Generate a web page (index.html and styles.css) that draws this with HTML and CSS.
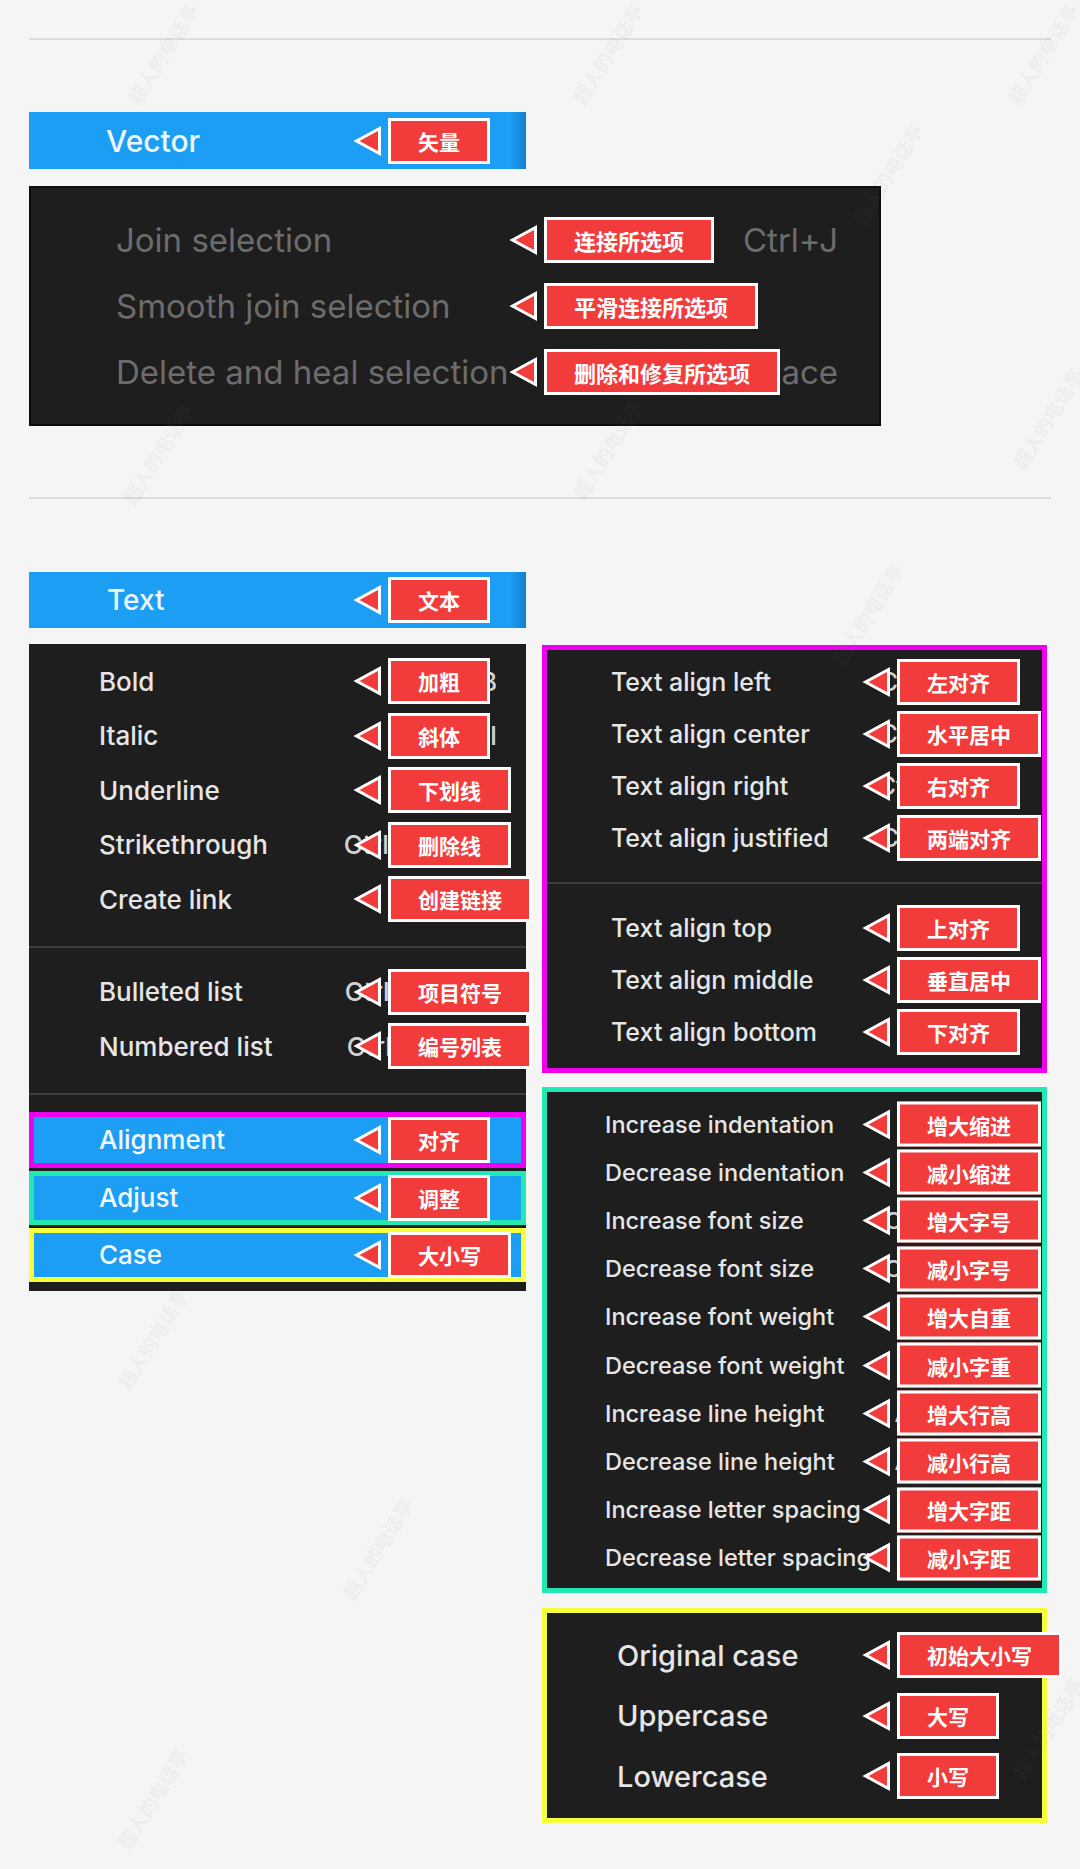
FILE: index.html
```html
<!DOCTYPE html>
<html lang="zh-CN">
<head>
<meta charset="utf-8">
<title>菜单注释 · Vector / Text</title>
<link rel="stylesheet" href="styles.css">
</head>
<body>
<main class="page">
  <hr class="rule">

  <section class="group group-vector">
    <div class="bar bar-vector">
      <span class="bar-label">Vector</span>
      <span class="note"><svg class="arrow" viewBox="0 0 28 30"><polygon points="2.5,15 25.5,2.5 25.5,27.5"/></svg><span class="tag">矢量</span></span>
    </div>
    <div class="panel panel-vector">
      <div class="item"><span class="label">Join selection</span><span class="key">Ctrl+J</span>
        <span class="note"><svg class="arrow" viewBox="0 0 28 30"><polygon points="2.5,15 25.5,2.5 25.5,27.5"/></svg><span class="tag">连接所选项</span></span></div>
      <div class="item"><span class="label">Smooth join selection</span>
        <span class="note"><svg class="arrow" viewBox="0 0 28 30"><polygon points="2.5,15 25.5,2.5 25.5,27.5"/></svg><span class="tag">平滑连接所选项</span></span></div>
      <div class="item"><span class="label">Delete and heal selection</span><span class="key">Backspace</span>
        <span class="note"><svg class="arrow" viewBox="0 0 28 30"><polygon points="2.5,15 25.5,2.5 25.5,27.5"/></svg><span class="tag">删除和修复所选项</span></span></div>
    </div>
  </section>

  <hr class="rule rule-mid">

  <section class="group group-text">
    <div class="bar bar-text">
      <span class="bar-label">Text</span>
      <span class="note"><svg class="arrow" viewBox="0 0 28 30"><polygon points="2.5,15 25.5,2.5 25.5,27.5"/></svg><span class="tag">文本</span></span>
    </div>

    <div class="columns">
      <div class="panel panel-text">
        <div class="item"><span class="label">Bold</span><span class="key">Ctrl+B</span>
          <span class="note"><svg class="arrow" viewBox="0 0 28 30"><polygon points="2.5,15 25.5,2.5 25.5,27.5"/></svg><span class="tag">加粗</span></span></div>
        <div class="item"><span class="label">Italic</span><span class="key">Ctrl+I</span>
          <span class="note"><svg class="arrow" viewBox="0 0 28 30"><polygon points="2.5,15 25.5,2.5 25.5,27.5"/></svg><span class="tag">斜体</span></span></div>
        <div class="item"><span class="label">Underline</span><span class="key">Ctrl+U</span>
          <span class="note"><svg class="arrow" viewBox="0 0 28 30"><polygon points="2.5,15 25.5,2.5 25.5,27.5"/></svg><span class="tag">下划线</span></span></div>
        <div class="item"><span class="label">Strikethrough</span><span class="key">Ctrl+Shift+X</span>
          <span class="note"><svg class="arrow" viewBox="0 0 28 30"><polygon points="2.5,15 25.5,2.5 25.5,27.5"/></svg><span class="tag">删除线</span></span></div>
        <div class="item"><span class="label">Create link</span><span class="key">Ctrl+K</span>
          <span class="note"><svg class="arrow" viewBox="0 0 28 30"><polygon points="2.5,15 25.5,2.5 25.5,27.5"/></svg><span class="tag">创建链接</span></span></div>
        <div class="sep"></div>
        <div class="item"><span class="label">Bulleted list</span><span class="key">Ctrl+Shift+8</span>
          <span class="note"><svg class="arrow" viewBox="0 0 28 30"><polygon points="2.5,15 25.5,2.5 25.5,27.5"/></svg><span class="tag">项目符号</span></span></div>
        <div class="item"><span class="label">Numbered list</span><span class="key">Ctrl+Shift+7</span>
          <span class="note"><svg class="arrow" viewBox="0 0 28 30"><polygon points="2.5,15 25.5,2.5 25.5,27.5"/></svg><span class="tag">编号列表</span></span></div>
        <div class="sep"></div>
        <div class="item item-sub hl-magenta"><span class="label">Alignment</span>
          <span class="note"><svg class="arrow" viewBox="0 0 28 30"><polygon points="2.5,15 25.5,2.5 25.5,27.5"/></svg><span class="tag">对齐</span></span></div>
        <div class="item item-sub hl-teal"><span class="label">Adjust</span>
          <span class="note"><svg class="arrow" viewBox="0 0 28 30"><polygon points="2.5,15 25.5,2.5 25.5,27.5"/></svg><span class="tag">调整</span></span></div>
        <div class="item item-sub hl-yellow"><span class="label">Case</span>
          <span class="note"><svg class="arrow" viewBox="0 0 28 30"><polygon points="2.5,15 25.5,2.5 25.5,27.5"/></svg><span class="tag">大小写</span></span></div>
      </div>

      <div class="stack">
        <div class="panel sub sub-align">
          <div class="item"><span class="label">Text align left</span><span class="key">Ctrl+Alt+L</span>
            <span class="note"><svg class="arrow" viewBox="0 0 28 30"><polygon points="2.5,15 25.5,2.5 25.5,27.5"/></svg><span class="tag">左对齐</span></span></div>
          <div class="item"><span class="label">Text align center</span><span class="key">Ctrl+Alt+T</span>
            <span class="note"><svg class="arrow" viewBox="0 0 28 30"><polygon points="2.5,15 25.5,2.5 25.5,27.5"/></svg><span class="tag">水平居中</span></span></div>
          <div class="item"><span class="label">Text align right</span><span class="key">Ctrl+Alt+R</span>
            <span class="note"><svg class="arrow" viewBox="0 0 28 30"><polygon points="2.5,15 25.5,2.5 25.5,27.5"/></svg><span class="tag">右对齐</span></span></div>
          <div class="item"><span class="label">Text align justified</span><span class="key">Ctrl+Alt+J</span>
            <span class="note"><svg class="arrow" viewBox="0 0 28 30"><polygon points="2.5,15 25.5,2.5 25.5,27.5"/></svg><span class="tag">两端对齐</span></span></div>
          <div class="sep"></div>
          <div class="item"><span class="label">Text align top</span>
            <span class="note"><svg class="arrow" viewBox="0 0 28 30"><polygon points="2.5,15 25.5,2.5 25.5,27.5"/></svg><span class="tag">上对齐</span></span></div>
          <div class="item"><span class="label">Text align middle</span>
            <span class="note"><svg class="arrow" viewBox="0 0 28 30"><polygon points="2.5,15 25.5,2.5 25.5,27.5"/></svg><span class="tag">垂直居中</span></span></div>
          <div class="item"><span class="label">Text align bottom</span>
            <span class="note"><svg class="arrow" viewBox="0 0 28 30"><polygon points="2.5,15 25.5,2.5 25.5,27.5"/></svg><span class="tag">下对齐</span></span></div>
        </div>

        <div class="panel sub sub-adjust">
          <div class="item"><span class="label">Increase indentation</span><span class="key">Tab</span>
            <span class="note"><svg class="arrow" viewBox="0 0 28 30"><polygon points="2.5,15 25.5,2.5 25.5,27.5"/></svg><span class="tag">增大缩进</span></span></div>
          <div class="item"><span class="label">Decrease indentation</span><span class="key">Shift+Tab</span>
            <span class="note"><svg class="arrow" viewBox="0 0 28 30"><polygon points="2.5,15 25.5,2.5 25.5,27.5"/></svg><span class="tag">减小缩进</span></span></div>
          <div class="item"><span class="label">Increase font size</span><span class="key">Ctrl+Shift+&gt;</span>
            <span class="note"><svg class="arrow" viewBox="0 0 28 30"><polygon points="2.5,15 25.5,2.5 25.5,27.5"/></svg><span class="tag">增大字号</span></span></div>
          <div class="item"><span class="label">Decrease font size</span><span class="key">Ctrl+Shift+&lt;</span>
            <span class="note"><svg class="arrow" viewBox="0 0 28 30"><polygon points="2.5,15 25.5,2.5 25.5,27.5"/></svg><span class="tag">减小字号</span></span></div>
          <div class="item"><span class="label">Increase font weight</span><span class="key">Ctrl+Alt+&gt;</span>
            <span class="note"><svg class="arrow" viewBox="0 0 28 30"><polygon points="2.5,15 25.5,2.5 25.5,27.5"/></svg><span class="tag">增大自重</span></span></div>
          <div class="item"><span class="label">Decrease font weight</span><span class="key">Ctrl+Alt+&lt;</span>
            <span class="note"><svg class="arrow" viewBox="0 0 28 30"><polygon points="2.5,15 25.5,2.5 25.5,27.5"/></svg><span class="tag">减小字重</span></span></div>
          <div class="item"><span class="label">Increase line height</span><span class="key">Alt+Shift+&gt;</span>
            <span class="note"><svg class="arrow" viewBox="0 0 28 30"><polygon points="2.5,15 25.5,2.5 25.5,27.5"/></svg><span class="tag">增大行高</span></span></div>
          <div class="item"><span class="label">Decrease line height</span><span class="key">Alt+Shift+&lt;</span>
            <span class="note"><svg class="arrow" viewBox="0 0 28 30"><polygon points="2.5,15 25.5,2.5 25.5,27.5"/></svg><span class="tag">减小行高</span></span></div>
          <div class="item"><span class="label">Increase letter spacing</span><span class="key">Alt+&gt;</span>
            <span class="note"><svg class="arrow" viewBox="0 0 28 30"><polygon points="2.5,15 25.5,2.5 25.5,27.5"/></svg><span class="tag">增大字距</span></span></div>
          <div class="item"><span class="label">Decrease letter spacing</span><span class="key">Alt+&lt;</span>
            <span class="note"><svg class="arrow" viewBox="0 0 28 30"><polygon points="2.5,15 25.5,2.5 25.5,27.5"/></svg><span class="tag">减小字距</span></span></div>
        </div>

        <div class="panel sub sub-case">
          <div class="item"><span class="label">Original case</span>
            <span class="note"><svg class="arrow" viewBox="0 0 28 30"><polygon points="2.5,15 25.5,2.5 25.5,27.5"/></svg><span class="tag">初始大小写</span></span></div>
          <div class="item"><span class="label">Uppercase</span>
            <span class="note"><svg class="arrow" viewBox="0 0 28 30"><polygon points="2.5,15 25.5,2.5 25.5,27.5"/></svg><span class="tag">大写</span></span></div>
          <div class="item"><span class="label">Lowercase</span>
            <span class="note"><svg class="arrow" viewBox="0 0 28 30"><polygon points="2.5,15 25.5,2.5 25.5,27.5"/></svg><span class="tag">小写</span></span></div>
        </div>
      </div>
    </div>
  </section>

  <div class="watermarks" aria-hidden="true">
    <span class="wm wm-1">超人的电话亭</span>
    <span class="wm wm-2">超人的电话亭</span>
    <span class="wm wm-3">超人的电话亭</span>
    <span class="wm wm-4">超人的电话亭</span>
    <span class="wm wm-5">超人的电话亭</span>
    <span class="wm wm-6">超人的电话亭</span>
    <span class="wm wm-7">超人的电话亭</span>
    <span class="wm wm-8">超人的电话亭</span>
    <span class="wm wm-9">超人的电话亭</span>
    <span class="wm wm-10">超人的电话亭</span>
    <span class="wm wm-11">超人的电话亭</span>
    <span class="wm wm-12">超人的电话亭</span>
  </div>
</main>
</body>
</html>
```

FILE: styles.css
```css
* { box-sizing: border-box; }

html, body { margin: 0; }

body {
  background: #f5f5f5;
  font-family: "Inter", "Liberation Sans", "Noto Sans CJK SC", sans-serif;
  color: #e6e6e6;
}

.page {
  position: relative;
  min-height: 1869px;
  padding: 38px 29px 0;
  overflow: hidden;
}

.rule {
  height: 2px;
  margin: 0;
  border: 0;
  background: #dcdcdc;
}

.rule-mid { margin-top: 71px; }

.group-vector { margin-top: 72px; }
.group-text { margin-top: 73px; }

/* blue title bars */
.bar {
  position: relative;
  display: flex;
  align-items: center;
  width: 497px;
  background: linear-gradient(to right, #1b9ef4 0, #1b9ef4 calc(100% - 16px), #1280d2 100%);
  color: #eef7ff;
  font-weight: 500;
}

.bar-vector { height: 57px; padding-left: 77px; font-size: 30px; }
.bar-text { height: 56px; padding-left: 78px; font-size: 28px; }
.bar .note { left: 325px; }

/* menu panels */
.panel {
  background: #1e1e1e;
}

.item {
  position: relative;
  display: flex;
  align-items: center;
  white-space: nowrap;
}

.key { margin-left: auto; color: #d2d2d2; }

.sep { height: 2px; background: #3d3d3d; }

/* Vector menu */
.panel-vector {
  width: 852px;
  margin-top: 17px;
  padding: 19px 0;
  border: 2px solid #0d0d0d;
  font-size: 33px;
  color: #6c6c6c;
}
.panel-vector .item { height: 66px; padding: 0 41px 0 85px; }
.panel-vector .key { color: #6c6c6c; }
.panel-vector .note { left: 479px; }
.panel-vector .tag { font-size: 22px; }

/* Text menu */
.columns {
  display: flex;
  align-items: flex-start;
  gap: 16px;
  margin-top: 16px;
}

.panel-text {
  width: 497px;
  padding: 10px 0 9px;
  font-size: 26px;
  font-weight: 500;
}
.panel-text .item { height: 54.5px; padding: 0 29px 0 70px; }
.panel-text .sep { margin: 19px 0 17px; }
.panel-text .note { left: 325px; }

.panel-text .item-sub {
  height: 54px;
  margin-top: 3px;
  padding-left: 65px;
  background: #1b9ef4;
  border: 5px solid;
  color: #f2f9ff;
}
.panel-text .sep + .item-sub { margin-top: 0; height: 56px; }
.panel-text .item-sub .note { left: 320px; }

.hl-magenta { border-color: #f000f0 !important; }
.hl-teal { border-color: #22e8b2 !important; }
.hl-yellow { border-color: #f6ff3c !important; }

/* sub menus */
.stack {
  display: flex;
  flex-direction: column;
  gap: 14px;
  width: 505px;
  margin-top: 1px;
}

.sub {
  border: 5px solid;
  font-weight: 500;
}
.sub .note { left: 316px; }

.sub-align {
  border-color: #f000f0;
  padding: 6px 0 10px;
  font-size: 25px;
}
.sub-align .item { height: 52px; padding: 0 40px 0 64px; }
.sub-align .sep { margin: 18px 0; }

.sub-adjust {
  border-color: #22e8b2;
  padding: 8px 0 6px;
  font-size: 23.5px;
}
.sub-adjust .item { height: 48.2px; padding: 0 19px 0 58px; }
.sub-adjust .tag { height: 45px; }

.sub-case {
  margin-top: 1px;
  border-color: #f6ff3c;
  padding: 12px 0 11.5px;
  font-size: 29px;
}
.sub-case .item { height: 60.5px; padding: 0 30px 0 70px; }

/* annotation tags */
.note {
  position: absolute;
  top: 50%;
  transform: translateY(-50%);
  display: flex;
  align-items: center;
  z-index: 2;
}

.arrow {
  width: 28px;
  height: 30px;
  margin-right: 6px;
  overflow: visible;
}
.arrow polygon {
  fill: #f23c3c;
  stroke: #ffffff;
  stroke-width: 3;
  stroke-linejoin: miter;
}

.tag {
  display: flex;
  align-items: center;
  height: 46px;
  padding: 0 27px;
  border: 3px solid #ffffff;
  background: #f23c3c;
  color: #ffffff;
  font-family: "Noto Sans CJK SC", sans-serif;
  font-size: 21px;
  font-weight: 700;
  white-space: nowrap;
}

/* watermarks */
.watermarks {
  position: absolute;
  inset: 0;
  pointer-events: none;
  z-index: 5;
}
.wm {
  position: absolute;
  font-family: "Noto Sans CJK SC", sans-serif;
  font-size: 19px;
  font-weight: 700;
  color: rgba(120, 120, 120, 0.08);
  transform: rotate(-58deg);
  white-space: nowrap;
}
.wm-1 { left: 105px; top: 40px; }
.wm-2 { left: 550px; top: 40px; }
.wm-3 { left: 985px; top: 40px; }
.wm-4 { left: 830px; top: 160px; }
.wm-5 { left: 100px; top: 440px; }
.wm-6 { left: 550px; top: 435px; }
.wm-7 { left: 990px; top: 405px; }
.wm-8 { left: 810px; top: 600px; }
.wm-9 { left: 95px; top: 1325px; }
.wm-10 { left: 320px; top: 1535px; }
.wm-11 { left: 990px; top: 1715px; }
.wm-12 { left: 95px; top: 1785px; }
```
